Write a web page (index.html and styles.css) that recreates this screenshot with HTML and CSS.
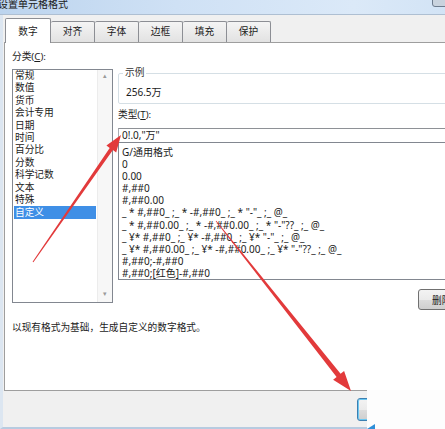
FILE: index.html
```html
<!DOCTYPE html>
<html lang="zh-CN">
<head>
    <meta charset="UTF-8">
    <title>设置单元格格式</title>
    <link rel="stylesheet" href="styles.css">
</head>
<body>
    <div class="window">
        <div class="titlebar">
            <span class="title">设置单元格格式</span>
            <span class="close-btn"></span>
        </div>

        <div class="client">
            <div class="tabs">
                <div class="tab active">数字</div>
                <div class="tab">对齐</div>
                <div class="tab">字体</div>
                <div class="tab">边框</div>
                <div class="tab">填充</div>
                <div class="tab">保护</div>
            </div>

            <div class="panel">
                <div class="category">
                    <div class="label">分类(<u>C</u>):</div>
                    <div class="listbox">
                        <ul class="items">
                            <li>常规</li>
                            <li>数值</li>
                            <li>货币</li>
                            <li>会计专用</li>
                            <li>日期</li>
                            <li>时间</li>
                            <li>百分比</li>
                            <li>分数</li>
                            <li>科学记数</li>
                            <li>文本</li>
                            <li>特殊</li>
                            <li class="selected">自定义</li>
                        </ul>
                        <div class="scrollbar">
                            <span class="arrow">&#9652;</span>
                            <span class="arrow">&#9662;</span>
                        </div>
                    </div>
                </div>

                <div class="detail">
                    <fieldset class="sample">
                        <legend>示例</legend>
                        <div class="sample-value">256.5万</div>
                    </fieldset>
                    <div class="label type-label">类型(<u>T</u>):</div>
                    <div class="type-input">0!.0,"万"</div>
                    <ul class="format-list">
                        <li>G/通用格式</li>
                        <li>0</li>
                        <li>0.00</li>
                        <li>#,##0</li>
                        <li>#,##0.00</li>
                        <li>_ * #,##0_ ;_ * -#,##0_ ;_ * "-"_ ;_ @_</li>
                        <li>_ * #,##0.00_ ;_ * -#,##0.00_ ;_ * "-"??_ ;_ @_</li>
                        <li>_ ¥* #,##0_ ;_ ¥* -#,##0_ ;_ ¥* "-"_ ;_ @_</li>
                        <li>_ ¥* #,##0.00_ ;_ ¥* -#,##0.00_ ;_ ¥* "-"??_ ;_ @_</li>
                        <li>#,##0;-#,##0</li>
                        <li>#,##0;[红色]-#,##0</li>
                    </ul>
                    <div class="actions">
                        <button class="btn">删除(<u>D</u>)</button>
                    </div>
                </div>

                <p class="hint">以现有格式为基础，生成自定义的数字格式。</p>
            </div>

            <div class="footer">
                <button class="btn default">确定</button>
            </div>
        </div>

        <!-- site stamp sitting over the lower right corner -->
        <div class="stamp">
            <svg width="78" height="39" viewBox="0 0 78 39">
                <polygon points="0,39 8,34 8,39" fill="#2f8fd8"/>
            </svg>
        </div>

        <!-- red pointer arrows drawn on top of the dialog -->
        <svg class="arrows" width="445" height="429" viewBox="0 0 445 429">
            <polygon points="32.6,261.7 109.7,147.9 106.4,145.6 121,135 116.2,152.4 112.9,150.1 33.4,262.3" />
            <polygon points="215.7,221.2 336.6,376.9 333.1,379.7 351,391 344.1,370.9 340.6,373.7 216.3,220.8" />
        </svg>
    </div>
</body>
</html>
```

FILE: styles.css
```css
* {
    margin: 0;
    padding: 0;
    box-sizing: border-box;
}

html, body {
    width: 445px;
    height: 429px;
    overflow: hidden;
}

body {
    font-family: "Noto Sans", "Noto Sans CJK SC", sans-serif;
    font-size: 9.7px;
    color: #1b1b1b;
    background: #f0f0f0;
}

u {
    text-decoration: underline;
}

.window {
    position: relative;
    width: 505px;
    height: 429px;
}

/* caption bar */
.titlebar {
    position: relative;
    height: 15px;
    background: linear-gradient(to right, #bcd4ee 0%, #cfe1f5 35%, #dbe9f8 70%, #cde0f4 100%);
    border-bottom: 1px solid #aebfd2;
    overflow: hidden;
}

.title {
    display: block;
    margin-left: -2px;
    margin-top: -1px;
    font-size: 10px;
    line-height: 10px;
    color: #202020;
}

.close-btn {
    position: absolute;
    left: 432px;
    top: -4px;
    width: 40px;
    height: 11px;
    border: 1px solid #6d7c8e;
    border-radius: 3px;
    background: #c9d3de;
}

.client {
    height: 414px;
    border-left: 3px solid #dce6f1;
    border-bottom: 2px solid #b7cbe0;
    display: flex;
    flex-direction: column;
}

/* tab strip */
.tabs {
    display: flex;
    align-items: flex-end;
    height: 27px;
    padding-left: 2px;
}

.tab {
    width: 44px;
    height: 21px;
    line-height: 20px;
    text-align: center;
    border: 1px solid #8c8e94;
    border-bottom: none;
    border-left: none;
    border-radius: 2px 2px 0 0;
    background: linear-gradient(#f4f4f4, #e2e2e2);
}

.tab.active {
    position: relative;
    z-index: 2;
    width: 46px;
    height: 25px;
    line-height: 25px;
    margin-bottom: -1px;
    border-left: 1px solid #8c8e94;
    background: #fff;
}

.panel {
    height: 349px;
    margin-left: 1px;
    padding: 8px 0 0 7px;
    background: #fff;
    border: 1px solid #9e9e9e;
    display: grid;
    grid-template-columns: 101px 375px;
    grid-template-rows: auto auto;
    column-gap: 5px;
    align-content: start;
    align-items: start;
}

.label {
    line-height: 12px;
}

/* category list */
.listbox {
    display: flex;
    height: 234px;
    margin-top: 6px;
    border: 1px solid #828790;
}

.items {
    flex: 1;
    list-style: none;
}

.items li {
    margin: 0 1px;
    padding-left: 1px;
    line-height: 12.4px;
    height: 12.4px;
}

.items li.selected {
    background: #3f8fe6;
    color: #fff;
    line-height: 13px;
    height: 13px;
}

.scrollbar {
    width: 15px;
    display: flex;
    flex-direction: column;
    justify-content: space-between;
    align-items: center;
    padding: 1px 0 3px;
    background: #f7f7f7;
    border-left: 1px solid #ececec;
}

.arrow {
    font-size: 7px;
    line-height: 10px;
    color: #9a9a9a;
}

/* type editor column */
.detail {
    margin-top: 16px;
}

.sample {
    height: 37px;
    padding: 0 0 0 7px;
    border: 1px solid #d5dfe5;
    border-radius: 2px;
}

.sample legend {
    margin-left: -3px;
    padding: 0 2px;
    line-height: 12px;
    color: #333;
}

.sample-value {
    margin-top: 7px;
    line-height: 12px;
    font-size: 10px;
}

.type-label {
    margin-top: 5px;
}

.type-input {
    height: 15px;
    margin-top: 7px;
    padding-left: 3px;
    line-height: 13px;
    font-size: 10px;
    border: 1px solid #a9acb3;
    border-top-color: #8e9196;
}

.format-list {
    list-style: none;
    height: 138px;
    margin-top: -1px;
    padding: 3px 0 0 3px;
    font-size: 10px;
    border: 1px solid #828790;
    overflow: hidden;
}

.format-list li {
    line-height: 12.1px;
    height: 12.1px;
    white-space: pre;
}

.actions {
    display: flex;
    justify-content: flex-end;
    margin-top: 9px;
}

.btn {
    width: 75px;
    height: 21px;
    padding-left: 13px;
    text-align: left;
    font-family: inherit;
    font-size: 9.7px;
    color: #1b1b1b;
    border: 1px solid #707070;
    border-radius: 3px;
    background: linear-gradient(#f3f3f3 0%, #ebebeb 50%, #dddddd 51%, #cfcfcf 100%);
}

.hint {
    grid-column: 1 / -1;
    margin-top: 12px;
    line-height: 12px;
}

.footer {
    height: 36px;
    padding: 7px 0 0 354px;
}

.btn.default {
    height: 23px;
    border-color: #3c7fb1;
    box-shadow: inset 0 0 0 1px #6cc8f2;
}

.stamp {
    position: absolute;
    left: 367px;
    top: 390px;
    width: 78px;
    height: 39px;
    background: #fdfdfd;
}

.stamp svg {
    display: block;
}

.arrows {
    position: absolute;
    left: 0;
    top: 0;
    pointer-events: none;
}

.arrows polygon {
    fill: #e23a3b;
}
```
